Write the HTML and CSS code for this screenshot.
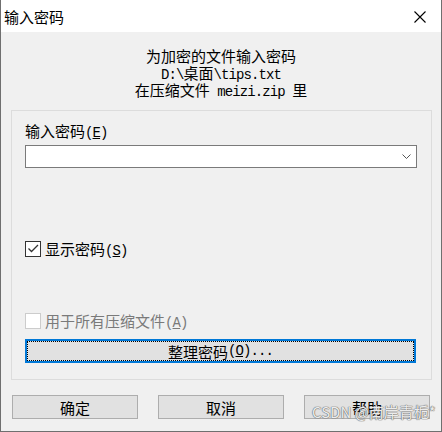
FILE: index.html
```html
<!DOCTYPE html>
<html lang="zh-CN">
<head>
    <meta charset="UTF-8">
    <title>输入密码</title>
    <link rel="stylesheet" href="styles.css">
</head>
<body>
    <div class="window">
        <div class="titlebar">
            <span class="title">输入密码</span>
            <span class="close">
                <svg width="12" height="12" viewBox="0 0 12 12">
                    <path d="M0.5 0.5 L11.5 11.5 M11.5 0.5 L0.5 11.5" stroke="#000" stroke-width="1.1" fill="none"/>
                </svg>
            </span>
        </div>

        <div class="info">
            <div class="line">为加密的文件输入密码</div>
            <div class="line"><span class="lat">D:\</span>桌面<span class="lat">\tips.txt</span></div>
            <div class="line">在压缩文件<span class="lat"> meizi.zip </span>里</div>
        </div>

        <div class="group">
            <div class="label">输入密码<span class="lat">(<u>E</u>)</span></div>
            <div class="combo">
                <svg width="9" height="5" viewBox="0 0 9 5">
                    <path d="M0.5 0.5 L4.5 4.5 L8.5 0.5" stroke="#555" stroke-width="1" fill="none"/>
                </svg>
            </div>

            <div class="check-row show-pw">
                <span class="box checked">
                    <svg width="12" height="10" viewBox="0 0 12 10">
                        <path d="M1.5 4.5 L4.5 7.5 L11 1" stroke="#333" stroke-width="1.3" fill="none"/>
                    </svg>
                </span>
                <span class="text">显示密码<span class="lat">(<u>S</u>)</span></span>
            </div>

            <div class="check-row disabled">
                <span class="box"></span>
                <span class="text">用于所有压缩文件<span class="lat">(<u>A</u>)</span></span>
            </div>

            <div class="btn focus">
                <span class="focus-ring">整理密码<span class="lat">(<u>O</u>)...</span></span>
            </div>
        </div>

        <div class="buttons">
            <div class="btn">确定</div>
            <div class="btn">取消</div>
            <div class="btn">帮助</div>
        </div>

        <div class="watermark">CSDN @南岸青栀*</div>
    </div>
</body>
</html>
```

FILE: styles.css
```css
body {
    margin: 0;
    background-color: #f0f0f0;
    font-family: "Noto Sans CJK SC", "Noto Sans", sans-serif;
    font-size: 15px;
    color: #000;
}
.window {
    position: relative;
    width: 442px;
    height: 432px;
    box-sizing: border-box;
    border-left: 1px solid #6f6f6f;
    border-right: 1px solid #6f6f6f;
    border-bottom: 1px solid #6f6f6f;
    background-color: #f0f0f0;
    overflow: hidden;
}
.lat {
    font-family: "Liberation Mono", monospace;
    font-size: 14px;
    letter-spacing: -0.9px;
    line-height: 1;
}
.titlebar {
    height: 32px;
    background-color: #fff;
    display: flex;
    align-items: center;
    padding-left: 3px;
}
.title {
    line-height: 17px;
}
.close {
    margin-left: auto;
    width: 26px;
    display: flex;
    align-items: center;
    margin-right: 1px;
    height: 32px;
    padding-top: 1px;
    box-sizing: border-box;
}
.info {
    margin-top: 15px;
    text-align: center;
}
.line {
    height: 17px;
    line-height: 17px;
}
.group {
    margin: 12px 0 0 10px;
    width: 421px;
    height: 270px;
    box-sizing: border-box;
    border: 1px solid #dcdcdc;
    padding: 11px 0 0 13px;
    display: flex;
    flex-direction: column;
}
.label {
    height: 17px;
    line-height: 17px;
}
.combo {
    margin-top: 6px;
    width: 392px;
    height: 23px;
    flex: none;
    box-sizing: border-box;
    border: 1px solid #7a7a7a;
    background-color: #fff;
    display: flex;
    align-items: center;
    justify-content: flex-end;
    padding-right: 5px;
}
.check-row {
    display: flex;
    align-items: center;
    height: 16px;
    flex: none;
}
.check-row .text {
    height: 16px;
    line-height: 16px;
}
.show-pw {
    margin-top: 73px;
}
.disabled {
    margin-top: 56px;
    color: #7a7a7a;
}
.box {
    width: 16px;
    height: 16px;
    box-sizing: border-box;
    border: 1px solid #333;
    background-color: #fff;
    margin-right: 4px;
    display: flex;
    align-items: center;
    justify-content: center;
}
.disabled .box {
    border-color: #cccccc;
}
.btn {
    height: 24px;
    flex: none;
    box-sizing: border-box;
    border: 1px solid #adadad;
    background-color: #e1e1e1;
    display: flex;
    align-items: center;
    justify-content: center;
    line-height: 17px;
}
.btn.focus {
    margin-top: 10px;
    width: 391px;
    border: 2px solid #0078d7;
    align-items: stretch;
}
.focus-ring {
    flex: 1;
    border: 1px dotted #000;
    display: flex;
    align-items: center;
    justify-content: center;
}
.buttons {
    margin: 15px 0 0 11px;
    display: flex;
    gap: 20px;
}
.buttons .btn {
    width: 126px;
}
.watermark {
    position: absolute;
    left: 311px;
    top: 403px;
    font-size: 15px;
    line-height: 18px;
    color: rgba(255, 255, 255, 0.9);
    text-shadow: 0 0 1px #666, 0 0 1px #666, 0 0 1px #888;
}
```
